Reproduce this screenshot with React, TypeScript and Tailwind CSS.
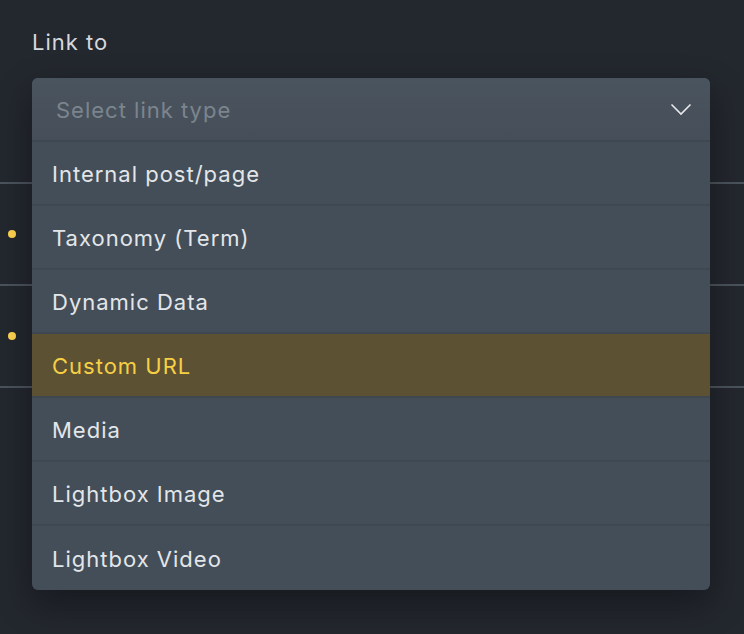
const options = [
  "Internal post/page",
  "Taxonomy (Term)",
  "Dynamic Data",
  "Custom URL",
  "Media",
  "Lightbox Image",
  "Lightbox Video",
];

export default function App() {
  const selected = "Custom URL";

  return (
    <div
      className="relative min-h-screen w-full overflow-hidden bg-[#23272e]"
      style={{ fontFamily: "Inter, 'Noto Sans', sans-serif" }}
    >
      {/* Panel behind the dropdown */}
      <div className="pt-[26px]">
        <div className="px-8 text-[22px] leading-8 tracking-[1px] text-[#d5d8dc]">Link to</div>
        <div className="h-[124px]" />
        <div className="h-[2px] bg-[#4a525b]" />
        <div className="flex h-[100px] items-center pl-[8px]">
          <span className="h-[8px] w-[8px] rounded-full bg-[#fdd34f]" />
        </div>
        <div className="h-[2px] bg-[#4a525b]" />
        <div className="flex h-[100px] items-center pl-[8px]">
          <span className="h-[8px] w-[8px] rounded-full bg-[#fdd34f]" />
        </div>
        <div className="h-[2px] bg-[#4a525b]" />
      </div>

      {/* Dropdown */}
      <div className="absolute left-8 right-[34px] top-[78px] overflow-hidden rounded-md bg-[#444e58] shadow-[0_14px_34px_rgba(0,0,0,0.35)]">
        <div className="flex h-16 items-center justify-between border-b-2 border-[#3f4851] bg-gradient-to-b from-[#4a545e] to-[#464f59] pl-6 pr-[18px]">
          <span className="pt-[3px] text-[22px] tracking-[1px] text-[#7c858e]">Select link type</span>
          <svg width="22" height="13" viewBox="0 0 22 13" fill="none">
            <path d="M1.5 1.5L11 11L20.5 1.5" stroke="#e6e8eb" strokeWidth="1.6" />
          </svg>
        </div>
        {options.map((opt, i) => (
          <div
            key={opt}
            className={`flex h-16 items-center px-5 pt-[3px] text-[22px] tracking-[1px] ${
              i < options.length - 1 ? "border-b-2 border-[#3f4851]" : ""
            } ${opt === selected ? "bg-[#5c5233] text-[#f7cf45]" : "text-[#e3e6e9]"}`}
          >
            {opt}
          </div>
        ))}
      </div>
    </div>
  );
}
